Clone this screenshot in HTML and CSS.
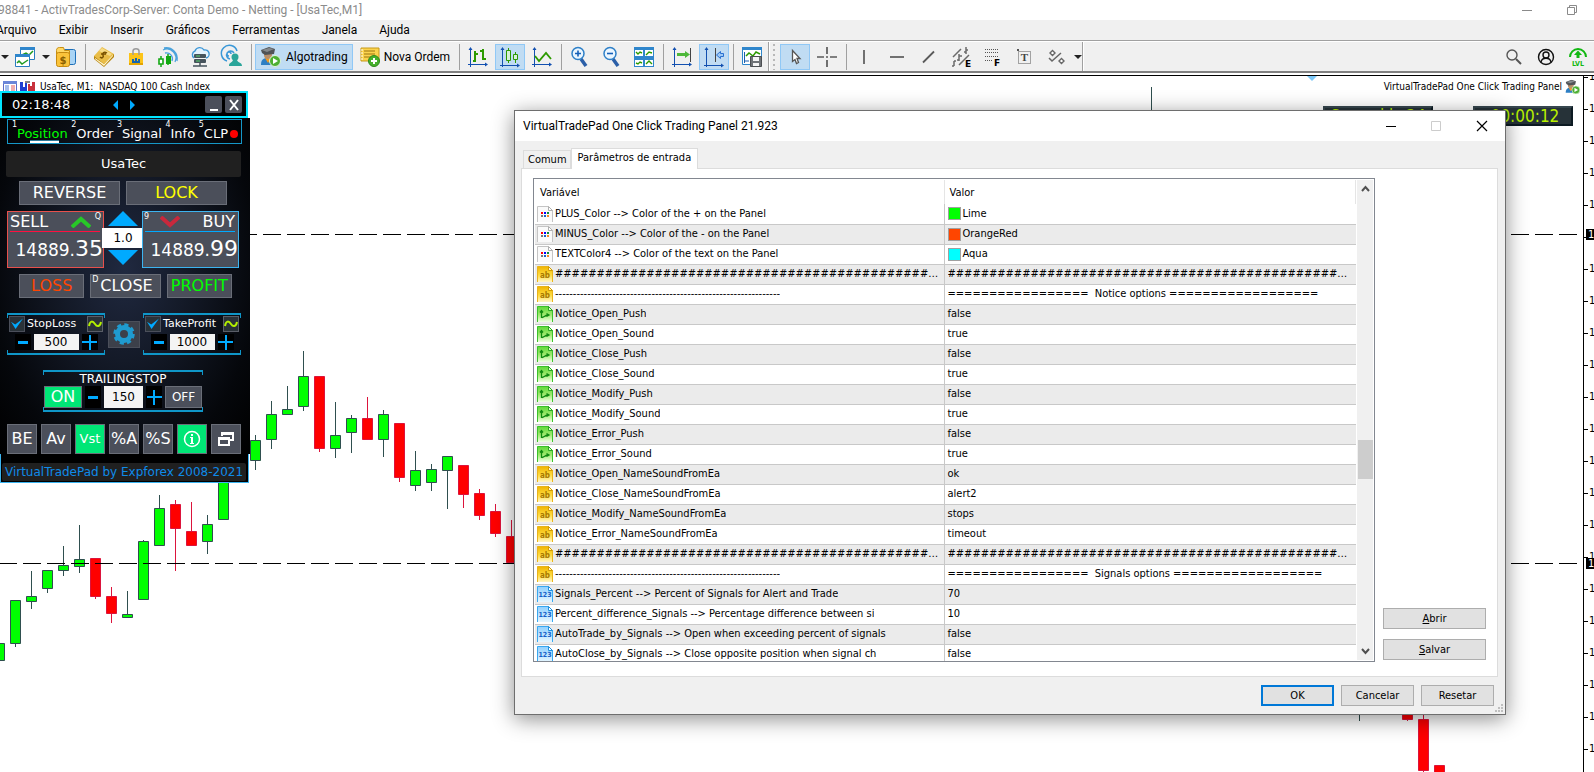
FILE: index.html
```
<!DOCTYPE html>
<html lang="pt">
<head>
<meta charset="utf-8">
<title>ActivTradesCorp-Server - UsaTec,M1</title>
<link rel="stylesheet" href="styles.css">
</head>
<body>
<svg class="defs" width="0" height="0" aria-hidden="true">
  <defs>
    <linearGradient id="gYellow" x1="0" y1="0" x2="0" y2="1"><stop offset="0" stop-color="#f0b400"/><stop offset=".55" stop-color="#ffdb3e"/><stop offset="1" stop-color="#fff6c8"/></linearGradient>
    <linearGradient id="gGreen" x1="0" y1="0" x2="0" y2="1"><stop offset="0" stop-color="#5fd83a"/><stop offset=".5" stop-color="#9be86a"/><stop offset="1" stop-color="#f0ffe2"/></linearGradient>
    <linearGradient id="gBlue" x1="0" y1="0" x2="0" y2="1"><stop offset="0" stop-color="#8fd0ff"/><stop offset="1" stop-color="#e6f6ff"/></linearGradient>
    <symbol id="i-color" viewBox="0 0 16 16"><path d="M.5 16V.5h11l4 4V16" fill="#fafafa" stroke="#c4c4c4"/><path d="M11.500 .5v4h4z" fill="#fff" stroke="#b0b0b0"/><path d="M4 6h2v2H4z" fill="#f00"/><path d="M7 6h2v2H7z" fill="#00f"/><path d="M10 6h2v2h-2z" fill="#0a8a3c"/><path d="M4 9h2v2H4z" fill="#777"/><path d="M7 9h2v2H7z" fill="#1560c0"/><path d="M10 9h2v2h-2z" fill="#f58a1f"/></symbol>
    <symbol id="i-str" viewBox="0 0 16 16"><path d="M.5 16V.5h11l4 4V16" fill="url(#gYellow)" stroke="#e8b31c"/><path d="M11.500 .5v4h4z" fill="#fff6cf" stroke="#d19c00"/><text x="8" y="12" text-anchor="middle" class="ico-ab">ab</text></symbol>
    <symbol id="i-bool" viewBox="0 0 16 16"><path d="M.5 16V.5h11l4 4V16" fill="url(#gGreen)" stroke="#3cc12c"/><path d="M11.500 .5v4h4z" fill="#d8ffc8" stroke="#2aa81e"/><path d="M4.500 12V5M3 6.500 4.500 4.500 6 6.500M5 11.500c2 0 2.500-2 6-2.500M9.500 7.500 12 9l-2.500 1.500" fill="none" stroke="#0f8a10" stroke-width="1.300"/></symbol>
    <symbol id="i-num" viewBox="0 0 16 16"><path d="M.5 16V.5h11l4 4V16" fill="url(#gBlue)" stroke="#3aa8f0"/><path d="M11.500 .5v4h4z" fill="#fff" stroke="#1e90e0"/><text x="8" y="11" text-anchor="middle" class="ico-123">123</text></symbol>
    <symbol id="i-algo" viewBox="0 0 22 20"><path d="M1 18c0-5 2-7 6-7s6 2 7 7z" fill="#2d7fc4"/><path d="M5 11l3 5 3-5z" fill="#f39a1e"/><circle cx="8" cy="8" r="4" fill="#b98f6a"/><path d="M1 3 9 0l6 2-1 5-9 1-3-2z" fill="#505356"/><path d="M2 3l7-2 5 1-7 3z" fill="#85898c"/><circle cx="15" cy="14" r="5.500" fill="#4caf32" stroke="#dff3d8"/><path d="M13 11l5 3-5 3z" fill="#fff"/></symbol>
  </defs>
</svg>

<div class="desktop">
  <header class="titlebar">
    <span class="titlebar-text">98841 - ActivTradesCorp-Server: Conta Demo - Netting - [UsaTec,M1]</span>
    <svg class="titlebar-ctl" width="60" height="14" viewBox="0 0 60 14"><path d="M0 7.500h10M45.500 4.500h7v7h-7zM47.500 4.500v-2h7v7h-2" fill="none" stroke="#8a8a8a"/></svg>
  </header>
  <nav class="menubar">
    <a href="#">Arquivo</a><a href="#">Exibir</a><a href="#">Inserir</a><a href="#">Gráficos</a><a href="#">Ferramentas</a><a href="#">Janela</a><a href="#">Ajuda</a>
  </nav>

  <div class="toolbar">
    <button class="caret caret-first" aria-label="Mais"></button>
    <button class="tool" aria-label="Gráficos"><svg viewBox="0 0 20 20"><path d="M5.500.5h14v12h-14z" fill="#fff" stroke="#2a7cc0"/><path d="M5 0h15v3H5z" fill="#2f86cc"/><path d="M7 8l4-2 3 2 4-4" fill="none" stroke="#1f9a1f" stroke-width="1.500"/><path d="M.5 7.500h14v12H.5z" fill="#fff" stroke="#2a7cc0"/><path d="M0 7h15v3H0z" fill="#2f86cc"/><path d="M2 16l2-2 3 3 3-2 3-2" fill="none" stroke="#1f9a1f" stroke-width="1.500"/></svg></button>
    <button class="caret" aria-label="Mais"></button>
    <button class="tool" aria-label="Conta"><svg viewBox="0 0 20 20"><rect x="6.500" y="2.500" width="13" height="15" rx="2" fill="#a9d4f5" stroke="#1d6fb8"/><path d="M.5 3.500c0-2 1-3 3-3h4l1 3h5v9H.5z" fill="#ffd865" stroke="#c98f10"/><rect x=".5" y="5.500" width="13" height="14" rx="2" fill="#fbc33a" stroke="#c58a10"/><text x="7" y="17" text-anchor="middle" class="ico-usd">$</text></svg></button>
    <span class="sep"></span>
    <button class="tool" aria-label="MetaEditor"><svg viewBox="0 0 20 20"><path d="M0 9v3l10 8 10-10V7z" fill="#b8860f"/><path d="M1 11l9 6 9-10v2L10 19l-9-7z" fill="#fff3c9"/><path d="M0 9 8 0l12 7-10 10z" fill="#e9bd48"/><path d="M5 4 8 1l10 6-2 2z" fill="#f7dc86"/><path d="M13 6c-3-2-5 0-4 2s-1 4-3 2M7 7h5" fill="none" stroke="#7a5200" stroke-width="1.500"/></svg></button>
    <button class="tool" aria-label="Mercado"><svg viewBox="0 0 20 20"><path d="M3 6h14v12H3z" fill="#fcc419"/><path d="M3 16h14v2H3z" fill="#e3a400"/><path d="M7 8V4c0-3 6-3 6 0v4" fill="none" stroke="#9b9b9b" stroke-width="1.500"/><path d="M6 16v-4h2v2h1v-3h2v3h1v-2h2v4z" fill="#1565b0"/></svg></button>
    <button class="tool" aria-label="Sinais"><svg viewBox="0 0 20 20"><path d="M7 6a6 6 0 0 1 7 8M5 3a9 9 0 0 1 12 12M6 1a11 11 0 0 1 13 13" fill="none" stroke="#4ba3dc" stroke-width="1.300"/><path d="M3 9v11M10 7v11" stroke="#12a812" stroke-width="1.500"/><path d="M1 12h4v5H1z" fill="#fff" stroke="#12a812" stroke-width="1.600"/><path d="M8 9h5v8H8z" fill="#12a812"/></svg></button>
    <button class="tool" aria-label="VPS"><svg viewBox="0 0 20 20"><path d="M4 11a4 4 0 0 1 1-7 5 5 0 0 1 9-1 4 4 0 0 1 2 8" fill="#e3f2fd" stroke="#3f97d6" stroke-width="1.400"/><rect x="4" y="7" width="12" height="4" rx="1" fill="#46535c"/><rect x="4" y="12" width="12" height="4" rx="1" fill="#46535c"/><path d="M10 16v3M3 19h14" stroke="#46535c" stroke-width="1.500"/><path d="M6 9h4M6 14h4" stroke="#55d36b"/></svg></button>
    <button class="tool" aria-label="Comunidade"><svg viewBox="0 0 20 20"><path d="M8 12A4 4 0 1 1 12 6M5 14A8 8 0 1 1 15 4M7 9a2 2 0 1 1 2-2" fill="none" stroke="#3a98d8" stroke-width="1.500"/><circle cx="13" cy="10" r="3.500" fill="#2aa59a"/><path d="M7 19c0-4 3-3 4-6h4c1 3 5 2 5 6z" fill="#2aa59a"/></svg></button>
    <span class="sep"></span>
    <button class="tool tool-text tool-on"><svg class="wide" viewBox="0 0 22 20"><use href="#i-algo"/></svg>Algotrading</button>
    <button class="tool tool-text"><svg viewBox="0 0 20 20"><path d="M1 1h18v13H1z" fill="#fbd34d" stroke="#c79a18"/><path d="M4 4h11M4 7h11M4 10h9" stroke="#9b7510"/><path d="M1 3h2M1 6h2M1 9h2M1 12h2" stroke="#fff"/><circle cx="14" cy="14" r="5.500" fill="#46b02c" stroke="#2e8a1a"/><path d="M14 11v6M11 14h6" stroke="#fff" stroke-width="2"/></svg>Nova Ordem</button>
    <span class="sep"></span>
    <button class="tool" aria-label="Barras"><svg viewBox="0 0 20 20"><path class="ax" d="M2.500 20V2M0 17.500h19"/><path class="axh" d="M2.500 0 4.500 3H.5zM20 17.500l-3 2v-4z"/><path d="M7 4v11M5 14h2M7 7h3M15 2v11M12 4h3M15 12h3" stroke="#2d9a00" stroke-width="2"/></svg></button>
    <button class="tool tool-on" aria-label="Velas"><svg viewBox="0 0 20 20"><path class="ax" d="M2.500 20V2M0 18.500h19"/><path class="axh" d="M2.500 0 4.500 3H.5zM20 18.500l-3 2v-4z"/><path d="M8.500 1v15M15.500 5v11" stroke="#2d9a00"/><path d="M6.500 3.500h4v10h-4zM13.500 7.500h4v5h-4z" fill="#d8f0d8" stroke="#2d9a00"/></svg></button>
    <button class="tool" aria-label="Linha"><svg viewBox="0 0 20 20"><path class="ax" d="M2.500 20V2M0 17.500h19"/><path class="axh" d="M2.500 0 4.500 3H.5zM20 17.500l-3 2v-4z"/><path d="M3 9l4 5 7-8 5 6" fill="none" stroke="#2d9a00" stroke-width="1.800"/></svg></button>
    <span class="sep"></span>
    <button class="tool" aria-label="Aumentar"><svg viewBox="0 0 20 20"><path d="M11 12l5 7" stroke="#2b5fa8" stroke-width="3.500"/><circle cx="8" cy="6.500" r="6" fill="#eaf6ff" stroke="#2f80c8" stroke-width="1.500"/><path d="M8 3.500v6M5 6.500h6" stroke="#1560b8" stroke-width="1.600"/></svg></button>
    <button class="tool" aria-label="Diminuir"><svg viewBox="0 0 20 20"><path d="M11 12l5 7" stroke="#2b5fa8" stroke-width="3.500"/><circle cx="8" cy="6.500" r="6" fill="#eaf6ff" stroke="#2f80c8" stroke-width="1.500"/><path d="M5 6.500h6" stroke="#1560b8" stroke-width="1.600"/></svg></button>
    <button class="tool" aria-label="Lado a lado"><svg viewBox="0 0 20 20"><path d="M0 0h20v20H0z" fill="#2f86cc"/><path d="M1 3h8v6H1zM11 3h8v6h-8zM1 13h8v6H1zM11 13h8v6h-8z" fill="#fff"/><path d="M2 5l2 2 2-2 2 1M12 8l3-3 3 1M2 16l2 1 2-2 2 1M12 17l3-3 3 3" fill="none" stroke="#2d9a00" stroke-width="1.400"/></svg></button>
    <span class="sep"></span>
    <button class="tool" aria-label="Rolagem"><svg viewBox="0 0 20 20"><path class="ax" d="M2.500 20V2M0 17.500h19"/><path class="axh" d="M2.500 0 4.500 3H.5zM20 17.500l-3 2v-4z"/><path d="M18.500 1v14" stroke="#444"/><path d="M5 6h8V4l5 3.500-5 3.500V9H5z" fill="#4db83a"/></svg></button>
    <button class="tool tool-on" aria-label="Deslocamento"><svg viewBox="0 0 20 20"><path class="ax" d="M2.500 20V2M0 18.500h19"/><path class="axh" d="M2.500 0 4.500 3H.5zM20 18.500l-3 2v-4z"/><path d="M11.500 1v14" stroke="#444"/><path d="M19.500 6.500h-3v-2l-4 3.500 4 3.500v-2h3z" fill="#9cc8f5" stroke="#2a70d0"/></svg></button>
    <span class="sep"></span>
    <button class="tool" aria-label="Modelos"><svg viewBox="0 0 20 20"><path d="M.5.5h19v17H.5z" fill="#fff" stroke="#2f86cc"/><path d="M0 0h20v3H0z" fill="#2f86cc"/><path d="M2.500 5v11M2 14h5" stroke="#1d5fae"/><path d="M4 9l3-3 4 3 3-4 4 2" fill="none" stroke="#2d9a00" stroke-width="1.500"/><path d="M8.500 9.500h11v10h-11z" fill="#6f7377" stroke="#4b4e51"/><path d="M11 10h6v4h-6zM11 16h6v3h-6z" fill="#f4f4f4"/></svg></button>
    <span class="edge"></span><span class="grip"></span>
    <button class="tool tool-on" aria-label="Cursor"><svg viewBox="0 0 20 20"><path d="M7.500 3.500v11l2.500-2 1.500 4 2-1-1.500-4h3z" fill="#fff" stroke="#555" stroke-width="1.300"/></svg></button>
    <button class="tool" aria-label="Mira"><svg viewBox="0 0 20 20"><path d="M10 0v7M10 13v7M0 10h7M13 10h7M9 10h2" stroke="#5a5a5a" stroke-width="1.700"/></svg></button>
    <span class="sep"></span>
    <button class="tool" aria-label="Linha vertical"><svg viewBox="0 0 20 20"><path d="M9 3v14" stroke="#5a5a5a" stroke-width="1.700"/></svg></button>
    <button class="tool" aria-label="Linha horizontal"><svg viewBox="0 0 20 20"><path d="M3 10h14" stroke="#5a5a5a" stroke-width="1.700"/></svg></button>
    <button class="tool" aria-label="Linha de tendência"><svg viewBox="0 0 20 20"><path d="M4 15.500 15 4.500" stroke="#5a5a5a" stroke-width="1.800"/></svg></button>
    <button class="tool" aria-label="Canal"><svg viewBox="0 0 20 20"><path d="M2 10 10 2M8 18 18 8M3 14v5M1 19h2M3 14h2M8 7v7M6 13h2M8 9h3M15 0v7M13 5h2M15 3h2" stroke="#6a6a6a" stroke-width="1.500"/><text x="14" y="20" class="ico-tag">E</text></svg></button>
    <button class="tool" aria-label="Fibonacci"><svg viewBox="0 0 20 20"><path d="M2 2.500h14M2 5.500h14M2 9.500h14M2 13.500h8" stroke="#555" stroke-dasharray="1 1"/><text x="11" y="19" class="ico-tag">F</text></svg></button>
    <button class="tool" aria-label="Texto"><svg viewBox="0 0 20 20"><path d="M3.500 4.500h12v12h-12z" fill="none" stroke="#555" stroke-dasharray="1 1"/><path d="M2 2h2v2H2z" fill="#555"/><text x="9.500" y="14" text-anchor="middle" class="ico-t">T</text></svg></button>
    <button class="tool" aria-label="Objetos"><svg viewBox="0 0 20 20"><path d="M5.500 3.500 8 6 5.500 8.500 3 6zM14.500 11.500 17 14l-2.500 2.500L12 14z" fill="#fff" stroke="#666" stroke-width="1.400"/><path d="M2 11l3 3 9-8" fill="none" stroke="#666" stroke-width="1.500"/></svg></button>
    <button class="caret" aria-label="Mais objetos"></button>
    <span class="edge"></span>
    <span class="spring"></span>
    <button class="tool" aria-label="Pesquisar"><svg viewBox="0 0 20 20"><circle cx="8" cy="8" r="5" fill="none" stroke="#555" stroke-width="1.400"/><path d="M12 12l5 5" stroke="#555" stroke-width="2"/></svg></button>
    <button class="tool" aria-label="Perfil"><svg viewBox="0 0 20 20"><circle cx="10" cy="10" r="7.500" fill="none" stroke="#111" stroke-width="1.400"/><circle cx="10" cy="8" r="3" fill="none" stroke="#111" stroke-width="1.400"/><path d="M5 15c1-5 9-5 10 0" fill="none" stroke="#111" stroke-width="1.400"/></svg></button>
    <button class="tool" aria-label="Nível"><svg viewBox="0 0 20 20"><path d="M2 10a8 8 0 0 1 16 0" fill="none" stroke="#12b812" stroke-width="2"/><path d="M10 3.500 14 8h-2.500v3h-3V8H6z" fill="#12b812"/><text x="10" y="19" text-anchor="middle" class="ico-lvl">LVL</text></svg></button>
  </div>

  <main class="chart">
    <svg class="plot" width="1583" height="698" viewBox="0 74 1583 698">
      <path class="wick up" d="M15.500 600v47M31.500 571v38M47.500 570v23M63.500 546v30M79.500 525v48M127.500 591v24M143.500 540v10M159.500 495v20M207.500 515v39M255.500 435v35M271.500 401v48M287.500 386v25M303.500 351v60M335.500 402v56M351.500 415v38M383.500 410v47M415.500 451v40M431.500 464v27M447.500 460v49M1359.500 700v21M1151.500 87v50"/>
      <g class="body up">
        <path d="M-5.500 643.500h10v17h-10zM10.500 600.500h10v43h-10zM26.500 596.500h10v5h-10zM42.500 570.500h10v18h-10zM58.500 565.500h10v5h-10zM74.500 559.500h10v7h-10zM122.500 614.500h10v3h-10zM138.500 541.500h10v58h-10zM154.500 508.500h10v37h-10zM202.500 524.500h10v17h-10zM218.500 470.500h10v49h-10zM250.500 440.500h10v20h-10zM266.500 414.500h10v25h-10zM282.500 409.500h10v5h-10zM298.500 376.500h10v30h-10zM330.500 435.500h10v13h-10zM346.500 418.500h10v14h-10zM378.500 414.500h10v25h-10zM410.500 470.500h10v15h-10zM426.500 469.500h10v13h-10zM442.500 456.500h10v14h-10z"/>
      </g>
      <path class="wick down" d="M95.500 590v9M111.500 587v36M175.500 500v71M191.500 502v40M319.500 440v12M367.500 397v30M399.500 440v42M463.500 490v18M479.500 489v31M495.500 504v33M511.500 520v20M1407.500 700v21M1423.500 710v62"/>
      <path class="body down" d="M90.500 558.500h10v38h-10zM106.500 596.500h10v17h-10zM170.500 504.500h10v24h-10zM186.500 531.500h10v14h-10zM314.500 376.500h10v72h-10zM362.500 418.500h10v21h-10zM394.500 423.500h10v54h-10zM458.500 465.500h10v29h-10zM474.500 493.500h10v22h-10zM490.500 511.500h10v22h-10zM506.500 536.500h10v26h-10zM1402.500 700.500h10v19h-10zM1418.500 719.500h10v51h-10zM1434.500 765.500h10v20h-10z"/>
      <path class="level" d="M-1 234.500h1578M-1 563.500h1578"/>
      <path d="M1307 76h10l-5 5z" fill="#7cc8f8"/>
    </svg>
    <div class="axis">
      <div class="ticks"><i>1</i><i>1</i><i>1</i><i>1</i><i>1</i><i>1</i><i>1</i><i>1</i><i>1</i><i>1</i><i>1</i><i>1</i><i>1</i><i>1</i><i>1</i><i>1</i><i>1</i><i>1</i><i>1</i><i>1</i><i>1</i><i>1</i></div>
      <b class="mark mark-a">1</b><b class="mark mark-b">1</b>
    </div>
    <div class="chart-head">
      <svg width="14" height="12" viewBox="0 0 14 12"><path d="M.5.5h13v11H.5z" fill="#fff" stroke="#5a6ac8"/><path d="M0 0h14v3H0z" fill="#6a86d8"/><path d="M2 5h4M2 7h4M2 9h4" stroke="#4a7ad8"/><path d="M8 5h4M8 7h4M8 9h4" stroke="#e05a5a"/></svg>
      <svg width="15" height="12" viewBox="0 0 15 12"><path d="M0 1h3v5h2V2h2v9H0z" fill="#1f3fd0"/><path d="M15 1h-3v4h-2V3H8v8h7z" fill="#c8323c"/><path d="M5 0h5v2H5z" fill="#888"/></svg>
      <span class="chart-name">UsaTec, M1:&nbsp; NASDAQ 100 Cash Index</span>
      <span class="chart-ea">VirtualTradePad One Click Trading Panel</span>
      <svg width="16" height="16" viewBox="0 0 22 20"><use href="#i-algo"/></svg>
    </div>
    <div class="lcd lcd-spread">Spread is 24</div>
    <div class="lcd lcd-clock">00:00:12</div>
  </main>

  <section class="pad" aria-label="VirtualTradePad">
    <div class="pad-head">
      <span>02:18:48</span>
      <svg width="24" height="10" viewBox="0 0 24 10"><path d="M6 0v10L1 5zM18 0v10l5-5z" fill="#00aaff"/></svg>
      <span class="pad-win"><button aria-label="Minimizar"><svg width="14" height="14" viewBox="0 0 14 14"><path d="M3 12h8" stroke="#fff" stroke-width="2"/></svg></button><button aria-label="Fechar"><svg width="14" height="14" viewBox="0 0 14 14"><path d="M3 2l8 10M11 2 3 12" stroke="#fff" stroke-width="2"/></svg></button></span>
    </div>
    <div class="pad-body">
      <nav class="pad-tabs">
        <a href="#" class="on"><sup>1</sup>Position</a><a href="#"><sup>2</sup>Order</a><a href="#"><sup>3</sup>Signal</a><a href="#"><sup>4</sup>Info</a><a href="#"><sup>5</sup>CLP<i class="dot"></i></a>
      </nav>
      <div class="symbol">UsaTec</div>
      <div class="pad-row two"><button>REVERSE</button><button class="yellow">LOCK</button></div>
      <div class="quotes">
        <button class="quote sell"><span class="q-top">SELL<svg width="20" height="12" viewBox="0 0 20 12"><path d="M1 11 10 3l9 8" fill="none" stroke="#28c828" stroke-width="4"/></svg><sup>Q</sup></span><span class="q-price">14889.<big>35</big></span></button>
        <div class="lots"><button class="tri" aria-label="Mais"><svg width="30" height="15" viewBox="0 0 30 15"><path d="M0 15 15 0l15 15z" fill="#00aaff"/></svg></button><input value="1.0" aria-label="Lotes"><button class="tri" aria-label="Menos"><svg width="30" height="15" viewBox="0 0 30 15"><path d="M0 0l15 15L30 0z" fill="#00aaff"/></svg></button></div>
        <button class="quote buy"><span class="q-top"><sup>9</sup><svg width="20" height="12" viewBox="0 0 20 12"><path d="M1 1l9 8 9-8" fill="none" stroke="#c8283c" stroke-width="4"/></svg>BUY</span><span class="q-price">14889.<big>99</big></span></button>
      </div>
      <div class="pad-row three"><button class="orange">LOSS</button><button class="close"><sup>D</sup>CLOSE</button><button class="lime">PROFIT</button></div>
      <div class="stops">
        <div class="frame">
          <div class="f-top"><input type="checkbox" id="sl" checked><label for="sl">StopLoss</label><button class="wave" aria-label="Curva"><svg width="14" height="8" viewBox="0 0 14 8"><path d="M1 6C2 0 5 1 7 4s5 3 6-2" fill="none" stroke="#b4f000" stroke-width="2"/></svg></button></div>
          <div class="f-num"><button class="minus" aria-label="Menos"></button><input value="500" aria-label="StopLoss"><button class="plus" aria-label="Mais"></button></div>
        </div>
        <button class="gear" aria-label="Ajustes"><svg width="22" height="22" viewBox="0 0 22 22"><circle cx="11" cy="11" r="6.500" fill="none" stroke="#1f9bd0" stroke-width="5"/><circle cx="11" cy="11" r="9" fill="none" stroke="#1f9bd0" stroke-width="3.500" stroke-dasharray="4 3.070"/></svg></button>
        <div class="frame">
          <div class="f-top"><input type="checkbox" id="tp" checked><label for="tp">TakeProfit</label><button class="wave" aria-label="Curva"><svg width="14" height="8" viewBox="0 0 14 8"><path d="M1 6C2 0 5 1 7 4s5 3 6-2" fill="none" stroke="#b4f000" stroke-width="2"/></svg></button></div>
          <div class="f-num"><button class="minus" aria-label="Menos"></button><input value="1000" aria-label="TakeProfit"><button class="plus" aria-label="Mais"></button></div>
        </div>
      </div>
      <div class="frame trailing">
        <div class="t-title">TRAILINGSTOP</div>
        <div class="t-row"><button class="green big">ON</button><button class="minus" aria-label="Menos"></button><input value="150" aria-label="Trailing"><button class="plus" aria-label="Mais"></button><button class="off">OFF</button></div>
      </div>
      <div class="pad-foot"><button>BE</button><button>Av</button><button class="green small">Vst</button><button>%A</button><button>%S</button><button class="green" aria-label="Info"><svg width="18" height="18" viewBox="0 0 18 18"><circle cx="9" cy="9" r="7.500" fill="none" stroke="#fff" stroke-width="1.500"/><path d="M8 4h2v2H8zM7 7h3v6h1v1H7v-1h1V8H7z" fill="#fff"/></svg></button><button aria-label="Janelas"><svg width="18" height="16" viewBox="0 0 18 16"><path d="M5 5V2h11v7h-4" fill="none" stroke="#fff" stroke-width="2"/><path d="M5 2h11v2H5z" fill="#fff"/><path d="M2 7h10v7H2z" fill="#4b4f5a" stroke="#fff" stroke-width="2"/><path d="M2 7h10v2H2z" fill="#fff"/></svg></button></div>
    </div>
    <div class="pad-credit"><span>VirtualTradePad by Expforex 2008-2021</span></div>
  </section>

  <section class="dialog" role="dialog" aria-label="VirtualTradePad One Click Trading Panel 21.923">
    <header class="dlg-title">
      <span>VirtualTradePad One Click Trading Panel 21.923</span>
      <svg width="106" height="14" viewBox="0 0 106 14"><path d="M2 7.500h10" stroke="#000"/><path d="M47.500 2.500h9v9h-9z" fill="none" stroke="#ccc"/><path d="M93 2l10 10M103 2 93 12" stroke="#000" stroke-width="1.200"/></svg>
    </header>
    <div class="dlg-body">
      <div class="tabs"><button class="tab">Comum</button><button class="tab tab-on">Parâmetros de entrada</button></div>
      <div class="page">
        <div class="list">
          <table>
            <colgroup><col class="c-var"><col></colgroup>
            <thead><tr><th>Variável</th><th>Valor</th></tr></thead>
            <tbody>
              <tr><td><div><svg><use href="#i-color"/></svg><span>PLUS_Color --&gt; Color of the + on the Panel</span></div></td><td><div><i class="sw lime-sw"></i>Lime</div></td></tr>
              <tr><td><div><svg><use href="#i-color"/></svg><span>MINUS_Color --&gt; Color of the - on the Panel</span></div></td><td><div><i class="sw orange-sw"></i>OrangeRed</div></td></tr>
              <tr><td><div><svg><use href="#i-color"/></svg><span>TEXTColor4 --&gt; Color of the text on the Panel</span></div></td><td><div><i class="sw aqua-sw"></i>Aqua</div></td></tr>
              <tr><td><div><svg><use href="#i-str"/></svg><span>##################################################</span></div></td><td><div><span>##################################################</span></div></td></tr>
              <tr><td><div><svg><use href="#i-str"/></svg><span>---------------------------------------------------------------</span></div></td><td><div>================= &nbsp;Notice options ==================</div></td></tr>
              <tr><td><div><svg><use href="#i-bool"/></svg><span>Notice_Open_Push</span></div></td><td><div>false</div></td></tr>
              <tr><td><div><svg><use href="#i-bool"/></svg><span>Notice_Open_Sound</span></div></td><td><div>true</div></td></tr>
              <tr><td><div><svg><use href="#i-bool"/></svg><span>Notice_Close_Push</span></div></td><td><div>false</div></td></tr>
              <tr><td><div><svg><use href="#i-bool"/></svg><span>Notice_Close_Sound</span></div></td><td><div>true</div></td></tr>
              <tr><td><div><svg><use href="#i-bool"/></svg><span>Notice_Modify_Push</span></div></td><td><div>false</div></td></tr>
              <tr><td><div><svg><use href="#i-bool"/></svg><span>Notice_Modify_Sound</span></div></td><td><div>true</div></td></tr>
              <tr><td><div><svg><use href="#i-bool"/></svg><span>Notice_Error_Push</span></div></td><td><div>false</div></td></tr>
              <tr><td><div><svg><use href="#i-bool"/></svg><span>Notice_Error_Sound</span></div></td><td><div>true</div></td></tr>
              <tr><td><div><svg><use href="#i-str"/></svg><span>Notice_Open_NameSoundFromEa</span></div></td><td><div>ok</div></td></tr>
              <tr><td><div><svg><use href="#i-str"/></svg><span>Notice_Close_NameSoundFromEa</span></div></td><td><div>alert2</div></td></tr>
              <tr><td><div><svg><use href="#i-str"/></svg><span>Notice_Modify_NameSoundFromEa</span></div></td><td><div>stops</div></td></tr>
              <tr><td><div><svg><use href="#i-str"/></svg><span>Notice_Error_NameSoundFromEa</span></div></td><td><div>timeout</div></td></tr>
              <tr><td><div><svg><use href="#i-str"/></svg><span>##################################################</span></div></td><td><div><span>##################################################</span></div></td></tr>
              <tr><td><div><svg><use href="#i-str"/></svg><span>---------------------------------------------------------------</span></div></td><td><div>================= &nbsp;Signals options ==================</div></td></tr>
              <tr><td><div><svg><use href="#i-num"/></svg><span>Signals_Percent --&gt; Percent of Signals for Alert and Trade</span></div></td><td><div>70</div></td></tr>
              <tr><td><div><svg><use href="#i-num"/></svg><span>Percent_difference_Signals --&gt; Percentage difference between si</span></div></td><td><div>10</div></td></tr>
              <tr><td><div><svg><use href="#i-num"/></svg><span>AutoTrade_by_Signals --&gt; Open when exceeding percent of signals</span></div></td><td><div>false</div></td></tr>
              <tr><td><div><svg><use href="#i-num"/></svg><span>AutoClose_by_Signals --&gt; Close opposite position when signal ch</span></div></td><td><div>false</div></td></tr>
            </tbody>
          </table>
          <div class="scroll">
            <button aria-label="Acima"><svg width="9" height="7" viewBox="0 0 9 7"><path d="M1 6l3.500-4L8 6" fill="none" stroke="#505050" stroke-width="2"/></svg></button>
            <div class="track"><div class="thumb"></div></div>
            <button aria-label="Abaixo"><svg width="9" height="7" viewBox="0 0 9 7"><path d="M1 1l3.500 4L8 1" fill="none" stroke="#505050" stroke-width="2"/></svg></button>
          </div>
        </div>
        <div class="side"><button class="btn"><u>A</u>brir</button><button class="btn"><u>S</u>alvar</button></div>
      </div>
      <div class="actions"><button class="btn btn-default">OK</button><button class="btn">Cancelar</button><button class="btn">Resetar</button></div>
    </div>
    <svg class="resize" width="8" height="8" viewBox="0 0 8 8"><path d="M6 0h2v2H6zM3 3h2v2H3zM6 3h2v2H6zM0 6h2v2H0zM3 6h2v2H3zM6 6h2v2H6z" fill="#bfbfbf"/></svg>
  </section>
</div>
</body>
</html>
```
FILE: styles.css
```
* { box-sizing: border-box; }
body {
  margin: 0;
  background: #fff;
  color: #000;
  font: 11px/14px "DejaVu Sans Condensed", "DejaVu Sans", sans-serif;
}
button, input { font: inherit; color: inherit; margin: 0; padding: 0; border: 0; background: none; }
a { color: inherit; text-decoration: none; }
.defs { position: absolute; }
.desktop { position: relative; display: flex; flex-direction: column; height: 100vh; overflow: hidden; }

/* Application window */
.titlebar {
  display: flex; justify-content: space-between; align-items: center;
  height: 20px; padding-right: 12px;
  font: 12px/18px Roboto, sans-serif; color: #8c8c8c;
}
.titlebar-text { margin-left: -2px; white-space: nowrap; }
.menubar {
  display: flex; align-items: center; gap: 22px; height: 21px;
  background: #f0f0f0; border-bottom: 1px solid #a0a0a0;
  font: 12px/20px Roboto, sans-serif;
}
.menubar a:first-child { margin-left: -4px; }
.toolbar {
  display: flex; align-items: center; height: 32px;
  background: #f0f0f0; border-top: 1px solid #fff; border-bottom: 2px solid #808080;
  font: 12px/18px Roboto, sans-serif;
}
.tool {
  display: flex; align-items: center; justify-content: center; flex: none;
  width: 30px; height: 26px; margin: 0 1px; border: 1px solid transparent; white-space: nowrap;
}
.tool svg { width: 20px; height: 20px; overflow: visible; flex: none; }
.tool svg.wide { width: 22px; }
.tool-text { width: auto; padding: 0 4px; gap: 4px; }
.tool-on { background: #c0dcf3; border-color: #90c8f6; }
.sep { width: 6px; height: 26px; flex: none; background: linear-gradient(#a0a0a0, #a0a0a0) 3px 0 / 1px 100% no-repeat; }
.edge { width: 2px; height: 100%; flex: none; background: #a0a0a0; border-right: 1px solid #fff; }
.grip { width: 2px; height: 26px; flex: none; margin: 0 4px 0 3px; background: repeating-linear-gradient(#b8b8b8 0 2px, transparent 2px 5px); }
.spring { flex: 1; }
.caret { width: 9px; height: 26px; flex: none; }
.caret::after { content: ""; display: block; width: 0; margin: 0 auto; border: 4px solid transparent; border-top-color: #222; border-bottom: 0; }
.ax { stroke: #1250b0; stroke-width: 1; fill: none; }
.axh { fill: #1250b0; }
.ico-usd { font: bold 10px "DejaVu Sans", sans-serif; fill: #8a6000; }
.ico-tag { font: bold 9px "DejaVu Sans", sans-serif; fill: #000; }
.ico-t { font: bold 11px "Liberation Serif", serif; fill: #444; }
.ico-lvl { font: bold 7px "DejaVu Sans Condensed", sans-serif; fill: #12b812; }
.ico-ab { font: bold 8px "DejaVu Sans Condensed", sans-serif; fill: #a87800; }
.ico-123 { font: bold 7px "DejaVu Sans Condensed", sans-serif; fill: #1560c8; }

/* Chart */
.chart { position: relative; flex: 1; min-height: 0; margin-top: 2px; overflow: hidden; border-top: 1px solid #000; }
.plot { position: absolute; left: 0; top: -2px; }
.wick { fill: none; }
.wick.up { stroke: #2f4f4f; }
.wick.down { stroke: #dc143c; }
.body.up { fill: #0f0; stroke: #2f4f4f; }
.body.down { fill: #f00; stroke: #dc143c; }
.level { stroke: #000; stroke-dasharray: 18 6; }
.axis { position: absolute; right: 0; top: 0; bottom: 0; width: 11px; border-left: 1px solid #000; background: #fff; }
.ticks { display: flex; flex-direction: column; gap: 18px; margin-top: -6px; }
.ticks i { display: flex; align-items: center; gap: 1px; height: 14px; font-style: normal; }
.ticks i::before { content: ""; width: 4px; height: 1px; background: #000; flex: none; }
.mark { position: absolute; left: 2px; width: 10px; padding-left: 2px; background: #000; color: #fff; line-height: 11px; font-weight: normal; }
.mark-a { top: 153px; }
.mark-b { top: 482px; }
.chart-head { position: relative; display: flex; align-items: center; gap: 3px; padding: 2px 13px 0 3px; height: 19px; font-size: 10px; }
.chart-name { margin-left: 2px; }
.chart-ea { margin-left: auto; }
.lcd {
  position: absolute; top: 30px; height: 20px; overflow: hidden;
  background: #263238; border: 2px solid; border-color: #37474f #0c1a22 #0c1a22 #37474f;
  color: #b8f000; font: 17px/16px "DejaVu Sans Condensed", sans-serif; text-align: center;
}
.lcd-spread { right: 161px; width: 110px; }
.lcd-clock { right: 21px; width: 100px; padding-left: 4px; }

/* Trade pad */
.pad { position: absolute; left: 0; top: 91px; width: 250px; color: #fff; font: 13px/16px "DejaVu Sans", sans-serif; }
.pad button { white-space: nowrap; }
.pad sup { font-size: 8px; line-height: 8px; }
.pad-head {
  display: grid; grid-template-columns: 100px 1fr auto; align-items: center;
  height: 27px; margin-right: 2px; padding: 0 4px 0 10px;
  background: #000; border: 2px solid #00e5ff;
}
.pad-win { display: flex; gap: 3px; }
.pad-win button { display: grid; place-items: center; width: 17px; height: 17px; background: #4b4f5a; border-radius: 2px; }
.pad-body {
  padding: 1px 8px 0 7px;
  background: radial-gradient(ellipse at 50% 45%, #202940 0%, #141a28 35%, #05070b 75%, #000 100%);
}
.pad-tabs { display: flex; justify-content: space-between; height: 25px; padding: 5px 3px 0 9px; border: 1px solid #1597c8; }
.pad-tabs a { position: relative; padding-top: 1px; }
.pad-tabs sup { position: absolute; left: -5px; top: -4px; }
.pad-tabs .on { color: #0f0; }
.pad-tabs .on sup { color: #fff; }
.pad-tabs .on::after { content: ""; position: absolute; left: 13px; right: 9px; bottom: 0; height: 3px; background: linear-gradient(#2f7898 33%, #fff 33%); }
.dot { display: inline-block; width: 8px; height: 8px; margin-left: 2px; border-radius: 50%; background: #f00; }
.symbol { margin: 7px 1px 4px -1px; line-height: 26px; text-align: center; background: #202020; border-radius: 2px; }
.pad-row { display: grid; gap: 6px; padding: 0 12px; height: 24px; font-size: 16px; }
.pad-row.two { grid-template-columns: 1fr 1fr; margin-bottom: 6px; padding-right: 15px; }
.pad-row.three { grid-template-columns: 65fr 70fr 65fr; margin-bottom: 15px; padding-right: 10px; }
.pad-row button, .pad-foot button, .t-row .green, .t-row .off { background: #4b4f5a; border: 1px solid #6a6e78; position: relative; }
.pad-row .close { padding-left: 2px; }
.pad-row sup { position: absolute; left: 1px; top: 1px; }
.pad .yellow { color: #ff0; }
.pad .orange { color: #ff4500; }
.pad .lime { color: #0f0; }
.quotes { display: grid; grid-template-columns: 97px 38px 97px; height: 55px; margin-bottom: 8px; }
.quote { display: flex; flex-direction: column; background: #4b4f5a; border: 1px solid #e8504c; text-align: left; padding: 0 3px 0 2px; position: relative; font-size: 17px; }
.quote.buy { border-color: #3cb4f0; }
.q-top { display: flex; justify-content: space-between; align-items: center; height: 20px; padding-right: 9px; font-size: 16px; border-bottom: 1px solid #ff1040; }
.buy .q-top { padding: 0 0 0 15px; border-bottom-color: #00aaff; }
.quote sup { position: absolute; right: 2px; top: 1px; }
.buy sup { left: 1px; right: auto; }
.q-price { line-height: 33px; text-align: right; margin-right: -3px; }
.q-price big { font-size: 22px; }
.lots { display: flex; flex-direction: column; align-items: center; justify-content: space-between; padding-bottom: 3px; }
.tri { height: 15px; line-height: 0; }
.lots input { width: 42px; height: 20px; background: #fff; color: #000; text-align: center; position: relative; font-size: 12px; }
.stops { display: grid; grid-template-columns: 98px 32px 98px; gap: 3px; align-items: center; margin: 0 -1px 15px 0; }
.frame { position: relative; height: 42px; padding: 3px 2px; }
.frame::before, .frame::after { content: ""; position: absolute; left: 0; right: 0; height: 3px; border: solid #0f96c8; border-width: 2px 1px 0; }
.frame::before { top: 0; }
.frame::after { bottom: 0; border-width: 0 1px 2px; }
.f-top { display: flex; gap: 2px; align-items: center; height: 16px; font-size: 11px; }
.f-top input { appearance: none; width: 16px; height: 16px; flex: none; background: #2a3238; border: 1px solid #4b4f5a; }
.f-top input::after { content: ""; display: block; width: 12px; height: 11px; margin: 1px; background: #00aaff; clip-path: polygon(0 35%, 35% 60%, 100% 5%, 38% 100%); }
.wave { display: grid; place-items: center; width: 16px; height: 16px; margin-left: auto; background: #2a3238; }
.pad .wave { border: 1px solid #5a5e68; }
.f-num { display: flex; justify-content: center; gap: 3px; margin-top: 2px; height: 16px; font-size: 12px; }
.f-num input, .t-row input { width: 45px; background: #f4f4f4; color: #000; text-align: center; }
.minus, .plus { width: 16px; background: linear-gradient(#00aaff, #00aaff) center / 10px 3px no-repeat #000; }
.plus { background: linear-gradient(#00aaff, #00aaff) center / 15px 2px no-repeat, linear-gradient(#00aaff, #00aaff) center / 2px 15px no-repeat, #000; }
.gear { display: grid; place-items: center; height: 27px; background: #3c404a; border: 1px solid #4b4f5a; }
.trailing { width: 160px; margin: 0 0 12px 36px; padding: 2px 1px; font-size: 12px; }
.t-title { line-height: 14px; text-align: center; }
.t-row { display: grid; grid-template-columns: 38px 16px 39px 16px 37px; justify-content: space-between; height: 22px; }
.t-row input { width: auto; min-width: 0; }
.t-row .big { font-size: 16px; }
.pad .green { background: #00e676; }
.pad-foot { display: grid; grid-template-columns: repeat(7, 30px); justify-content: space-between; height: 30px; font-size: 16px; margin-right: 1px; }
.pad-foot button { display: grid; place-items: center; }
.pad-foot .small { font-size: 13px; }
.pad-credit { margin-right: 1px; padding: 9px 2px 1px 1px; background: #000; border: 1px solid #3cb4f0; border-top: 0; font-size: 12px; color: #0f8be8; text-align: center; }
.pad-credit span { display: block; line-height: 18px; background: #202020; border-radius: 2px; white-space: nowrap; }

/* Dialog */
.dialog {
  position: absolute; left: 514px; right: 88px; top: 110px; bottom: 57px;
  display: flex; flex-direction: column;
  background: #f0f0f0; border: 1px solid #6e6e6e;
  box-shadow: 0 4px 20px rgba(0, 0, 0, .45);
}
.dlg-title { display: flex; justify-content: space-between; align-items: center; height: 30px; padding: 0 15px 0 8px; background: #fff; font: 12px/18px Roboto, sans-serif; }
.dlg-body { flex: 1; min-height: 0; display: flex; flex-direction: column; padding: 7px 7px 8px 6px; }
.tabs { display: flex; align-items: flex-end; padding-left: 2px; }
.tab { height: 18px; padding: 0 3px 0 4px; border: 1px solid #dcdcdc; border-bottom: 0; }
.tab-on { height: 21px; padding: 0 6px 2px; margin-bottom: -1px; position: relative; background: #fff; }
.page { flex: 1; min-height: 0; display: flex; gap: 8px; padding: 9px 11px 14px 11px; background: #fff; border: 1px solid #dcdcdc; }
.list { flex: 1; display: flex; min-width: 0; overflow: hidden; border: 1px solid #828790; padding: 1px; }
.list table { flex: 1; min-width: 0; width: 100%; border-collapse: collapse; table-layout: fixed; align-self: flex-start; }
.c-var { width: 409px; }
th { height: 24px; padding: 2px 5px 0; font-weight: normal; text-align: left; border-right: 1px solid #e5e5e5; }
td { height: 20px; padding: 0; border-bottom: 1px solid #c8c8c8; border-right: 1px solid #c8c8c8; }
td:last-child { border-right: 0; }
tbody tr:nth-child(even) { background: #ebebeb; }
td div { display: flex; align-items: center; gap: 2px; height: 19px; padding: 0 4px 0 2px; white-space: nowrap; }
td:last-child div { padding: 0 4px 0 3px; }
td svg { width: 16px; height: 16px; flex: none; }
td span { overflow: hidden; text-overflow: ellipsis; }
.sw { width: 13px; height: 13px; border: 1px solid #a0a0a0; flex: none; }
.lime-sw { background: #0f0; }
.orange-sw { background: #ff4500; }
.aqua-sw { background: #0ff; }
.scroll { display: flex; flex-direction: column; width: 16px; flex: none; margin-left: 1px; background: #f0f0f0; }
.scroll button { height: 17px; line-height: 0; }
.track { flex: 1; }
.thumb { width: 15px; height: 39px; margin: 243px auto 0; background: #cdcdcd; }
.side { display: flex; flex-direction: column; justify-content: flex-end; gap: 10px; width: 103px; padding-bottom: 2px; }
.btn { height: 21px; width: 73px; background: #e1e1e1; border: 1px solid #adadad; }
.side .btn { width: 100%; }
.btn-default { border: 2px solid #0078d7; }
.actions { display: flex; justify-content: flex-end; gap: 7px; padding: 8px 4px 0 0; }
.resize { position: absolute; right: 2px; bottom: 2px; }
```
